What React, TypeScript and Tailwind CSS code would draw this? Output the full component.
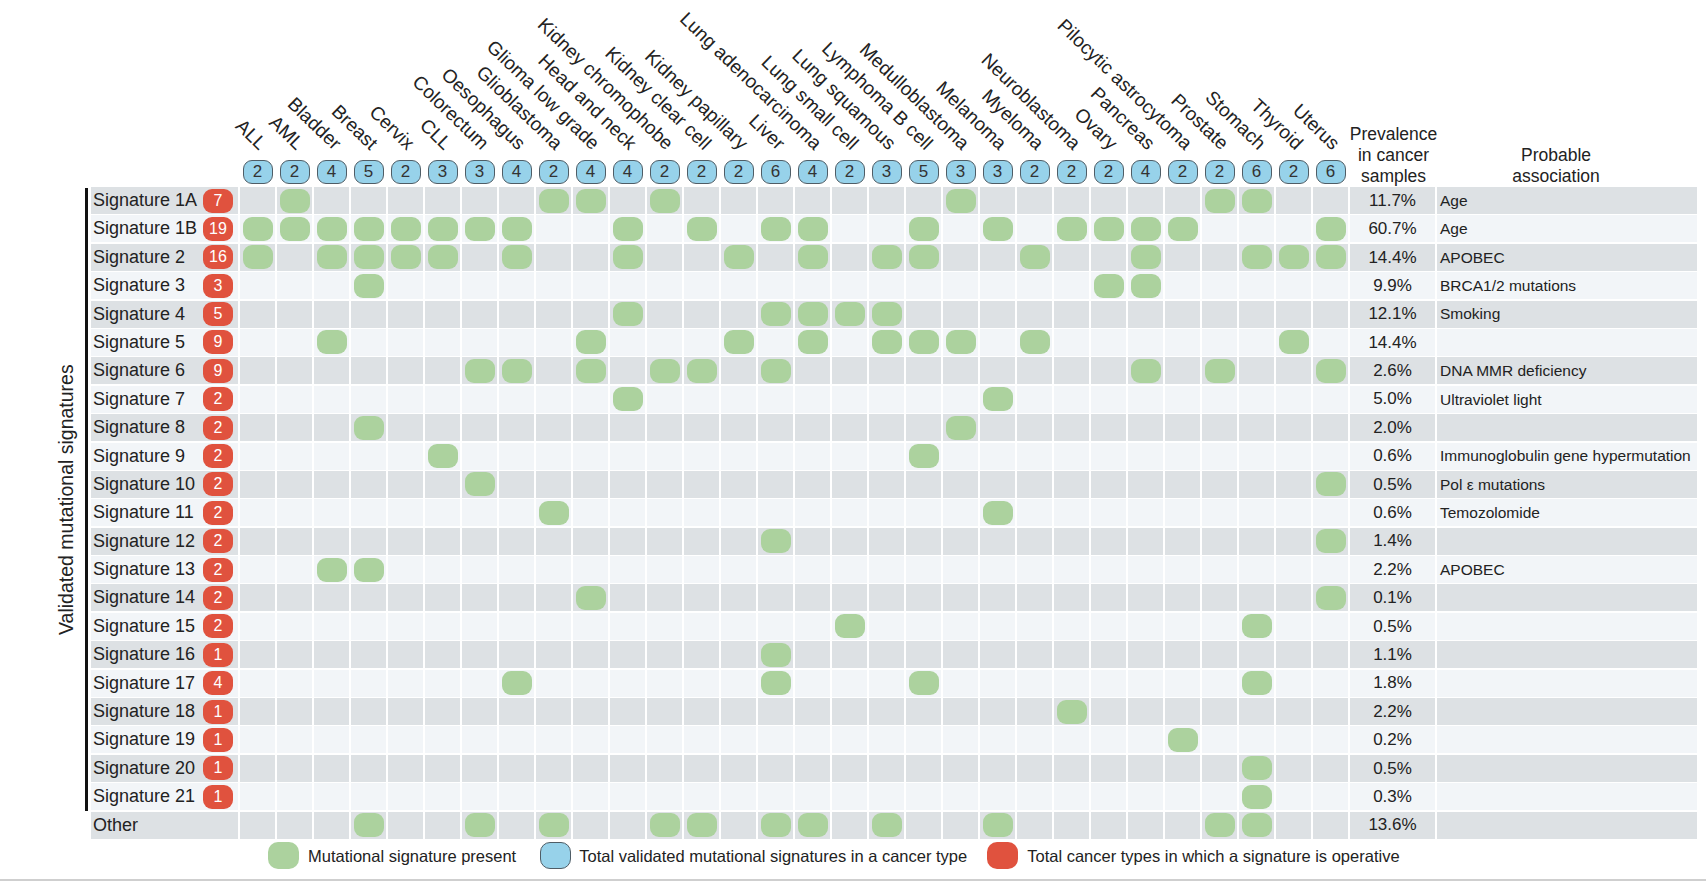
import React from "react";

const CANCERS = [
  "ALL", "AML", "Bladder", "Breast", "Cervix", "CLL", "Colorectum", "Oesophagus",
  "Glioblastoma", "Glioma low grade", "Head and neck", "Kidney chromophobe",
  "Kidney clear cell", "Kidney papillary", "Liver", "Lung adenocarcinoma",
  "Lung small cell", "Lung squamous", "Lymphoma B cell", "Medulloblastoma",
  "Melanoma", "Myeloma", "Neuroblastoma", "Ovary", "Pancreas",
  "Pilocytic astrocytoma", "Prostate", "Stomach", "Thyroid", "Uterus",
];

const TOTALS = [2, 2, 4, 5, 2, 3, 3, 4, 2, 4, 4, 2, 2, 2, 6, 4, 2, 3, 5, 3, 3, 2, 2, 2, 4, 2, 2, 6, 2, 6];

interface SigRow {
  name: string;
  types?: number;
  present: number[];
  prevalence: string;
  association?: string;
}

const SIGNATURES: SigRow[] = [
  { name: "Signature 1A", types: 7, present: [1, 8, 9, 11, 19, 26, 27], prevalence: "11.7%", association: "Age" },
  { name: "Signature 1B", types: 19, present: [0, 1, 2, 3, 4, 5, 6, 7, 10, 12, 14, 15, 18, 20, 22, 23, 24, 25, 29], prevalence: "60.7%", association: "Age" },
  { name: "Signature 2", types: 16, present: [0, 2, 3, 4, 5, 7, 10, 13, 15, 17, 18, 21, 24, 27, 28, 29], prevalence: "14.4%", association: "APOBEC" },
  { name: "Signature 3", types: 3, present: [3, 23, 24], prevalence: "9.9%", association: "BRCA1/2 mutations" },
  { name: "Signature 4", types: 5, present: [10, 14, 15, 16, 17], prevalence: "12.1%", association: "Smoking" },
  { name: "Signature 5", types: 9, present: [2, 9, 13, 15, 17, 18, 19, 21, 28], prevalence: "14.4%" },
  { name: "Signature 6", types: 9, present: [6, 7, 9, 11, 12, 14, 24, 26, 29], prevalence: "2.6%", association: "DNA MMR deficiency" },
  { name: "Signature 7", types: 2, present: [10, 20], prevalence: "5.0%", association: "Ultraviolet light" },
  { name: "Signature 8", types: 2, present: [3, 19], prevalence: "2.0%" },
  { name: "Signature 9", types: 2, present: [5, 18], prevalence: "0.6%", association: "Immunoglobulin gene hypermutation" },
  { name: "Signature 10", types: 2, present: [6, 29], prevalence: "0.5%", association: "Pol ε mutations" },
  { name: "Signature 11", types: 2, present: [8, 20], prevalence: "0.6%", association: "Temozolomide" },
  { name: "Signature 12", types: 2, present: [14, 29], prevalence: "1.4%" },
  { name: "Signature 13", types: 2, present: [2, 3], prevalence: "2.2%", association: "APOBEC" },
  { name: "Signature 14", types: 2, present: [9, 29], prevalence: "0.1%" },
  { name: "Signature 15", types: 2, present: [16, 27], prevalence: "0.5%" },
  { name: "Signature 16", types: 1, present: [14], prevalence: "1.1%" },
  { name: "Signature 17", types: 4, present: [7, 14, 18, 27], prevalence: "1.8%" },
  { name: "Signature 18", types: 1, present: [22], prevalence: "2.2%" },
  { name: "Signature 19", types: 1, present: [25], prevalence: "0.2%" },
  { name: "Signature 20", types: 1, present: [27], prevalence: "0.5%" },
  { name: "Signature 21", types: 1, present: [27], prevalence: "0.3%" },
];

const OTHER: SigRow = {
  name: "Other",
  present: [3, 6, 8, 11, 12, 14, 15, 17, 20, 26, 27],
  prevalence: "13.6%",
};

const GreenPill = () => <div className="w-[30px] h-[24px] rounded-[9px] bg-[#acd29e]" />;

const MatrixRow: React.FC<{ row: SigRow; index: number }> = ({ row, index }) => {
  const shade = index % 2 === 0 ? "bg-[#dde1e4]" : "bg-[#f2f5f8]";
  return (
    <div className="flex h-[28.4px] pb-[1.4px]">
      <div className={`w-[147px] shrink-0 mr-[2px] flex items-center pl-[2px] pr-[5px] ${shade}`}>
        <span className="text-[18px] whitespace-nowrap">{row.name}</span>
        {row.types !== undefined && (
          <span className="ml-auto w-[30px] h-[24px] rounded-[9px] bg-[#e0523e] text-white text-[16px] flex items-center justify-center">
            {row.types}
          </span>
        )}
      </div>
      {CANCERS.map((c, i) => (
        <div key={c} className="w-[37px] shrink-0 pr-[2px]">
          <div className={`h-full flex items-center justify-center ${shade}`}>
            {row.present.includes(i) && <GreenPill />}
          </div>
        </div>
      ))}
      <div className={`w-[85px] shrink-0 mr-[2px] flex items-center justify-center text-[17px] ${shade}`}>
        {row.prevalence}
      </div>
      <div className={`w-[260px] shrink-0 flex items-center pl-[3px] text-[15.5px] whitespace-nowrap ${shade}`}>
        {row.association}
      </div>
    </div>
  );
};

export default function App() {
  return (
    <div className="w-[1706px] h-[884px] bg-white text-[#222] font-['Liberation_Sans',Arial,sans-serif] flex flex-col overflow-hidden">
      {/* column headers */}
      <div className="flex h-[187px] shrink-0">
        <div className="w-[240px] shrink-0" />
        <div className="w-[1110px] shrink-0 flex flex-col">
          <div className="h-[160px] flex">
            {CANCERS.map((c) => (
              <div key={c} className="relative w-[37px] shrink-0">
                <span className="absolute right-[20px] bottom-[7px] origin-bottom-right rotate-[44deg] whitespace-nowrap leading-none text-[19px]">
                  {c}
                </span>
              </div>
            ))}
          </div>
          <div className="h-[24px] flex">
            {TOTALS.map((n, i) => (
              <div key={i} className="w-[37px] shrink-0 pr-[2px] flex justify-center">
                <div className="w-[30px] h-[24px] rounded-[9px] border-[1.5px] border-[#4f5d66] bg-[#97d2ea] flex items-center justify-center text-[17px] text-[#333]">
                  {n}
                </div>
              </div>
            ))}
          </div>
        </div>
        <div className="w-[87px] shrink-0 flex flex-col justify-end items-center text-center text-[17.5px] leading-[21px] whitespace-nowrap">
          <span>Prevalence</span>
          <span>in cancer</span>
          <span>samples</span>
        </div>
        <div className="w-[260px] shrink-0 pr-[22px] flex flex-col justify-end items-center text-center text-[17.5px] leading-[21px]">
          <span>Probable</span>
          <span>association</span>
        </div>
      </div>

      {/* validated signatures */}
      <div className="flex shrink-0">
        <div className="w-[85px] shrink-0 pl-[48px] flex items-center justify-center">
          <span className="-rotate-90 whitespace-nowrap text-[19.5px]">Validated mutational signatures</span>
        </div>
        <div className="w-[3px] shrink-0 my-[1px] bg-[#111]" />
        <div className="ml-[3px] flex flex-col">
          {SIGNATURES.map((row, i) => (
            <MatrixRow key={row.name} row={row} index={i} />
          ))}
        </div>
      </div>
      <div className="flex pl-[91px] shrink-0">
        <div className="flex flex-col">
          <MatrixRow row={OTHER} index={22} />
        </div>
      </div>

      {/* legend */}
      <div className="h-[32px] shrink-0 flex items-center pl-[268px] text-[16.5px] whitespace-nowrap">
        <div className="w-[31px] h-[27px] rounded-[10px] bg-[#acd29e]" />
        <span className="ml-[9px]">Mutational signature present</span>
        <div className="ml-[24px] w-[31px] h-[27px] rounded-[10px] border-[1.5px] border-[#4f5d66] bg-[#97d2ea]" />
        <span className="ml-[8px]">Total validated mutational signatures in a cancer type</span>
        <div className="ml-[20px] w-[31px] h-[27px] rounded-[10px] bg-[#e0523e]" />
        <span className="ml-[9px]">Total cancer types in which a signature is operative</span>
      </div>
      <div className="h-[7px] shrink-0" />
      <div className="h-[2px] shrink-0 bg-[#cfcfcf]" />
    </div>
  );
}
